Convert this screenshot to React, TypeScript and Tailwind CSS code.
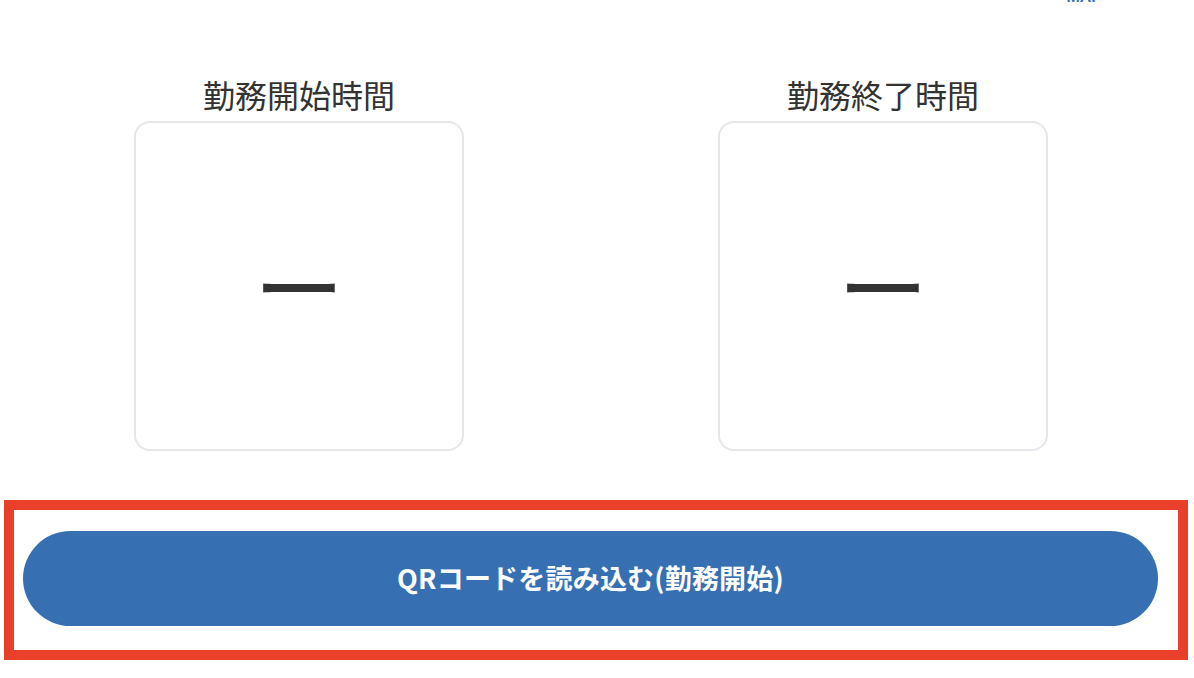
import React from 'react';

const jp = { fontFamily: '"Noto Sans CJK JP", "Noto Sans", sans-serif' };

type TimeCardProps = { label: string; value?: string };

function TimeCard({ label, value }: TimeCardProps) {
  return (
    <div className="flex flex-col items-center">
      <h2 className="text-[32px] leading-[40px] font-normal text-[#333333]">{label}</h2>
      <div className="mt-[7px] flex h-[330px] w-[330px] items-center justify-center rounded-[16px] border-2 border-[#e6e6ea] bg-white">
        <span className="-mt-[6px] text-[90px] leading-none font-normal text-[#333333]">{value ?? 'ー'}</span>
      </div>
    </div>
  );
}

export default function App() {
  return (
    <div className="h-[678px] w-[1194px] overflow-hidden bg-white" style={jp}>
      {/* Cut-off link at the top edge */}
      <div className="-mt-[11px] flex h-[15px] justify-end pr-[92px]">
        <span
          className="text-[16px] leading-[15px] font-bold text-[#3670b3]"
          style={{ fontFamily: '"Liberation Sans", sans-serif' }}
        >
          MAP
        </span>
      </div>

      {/* Work times */}
      <div className="mt-[70px] grid grid-cols-[584px_584px] pl-[7px]">
        <TimeCard label="勤務開始時間" />
        <TimeCard label="勤務終了時間" />
      </div>

      {/* Highlighted action */}
      <div className="mt-[49px] ml-[4px] h-[160px] w-[1184px] border-[10px] border-[#e8402a] pt-[21px] pr-[20px] pl-[9px]">
        <button className="flex h-[95px] w-full items-center justify-center rounded-full bg-[#3670b3] text-[27px] font-bold tracking-[0.2px] text-white">
          QRコードを読み込む(勤務開始)
        </button>
      </div>
    </div>
  );
}
